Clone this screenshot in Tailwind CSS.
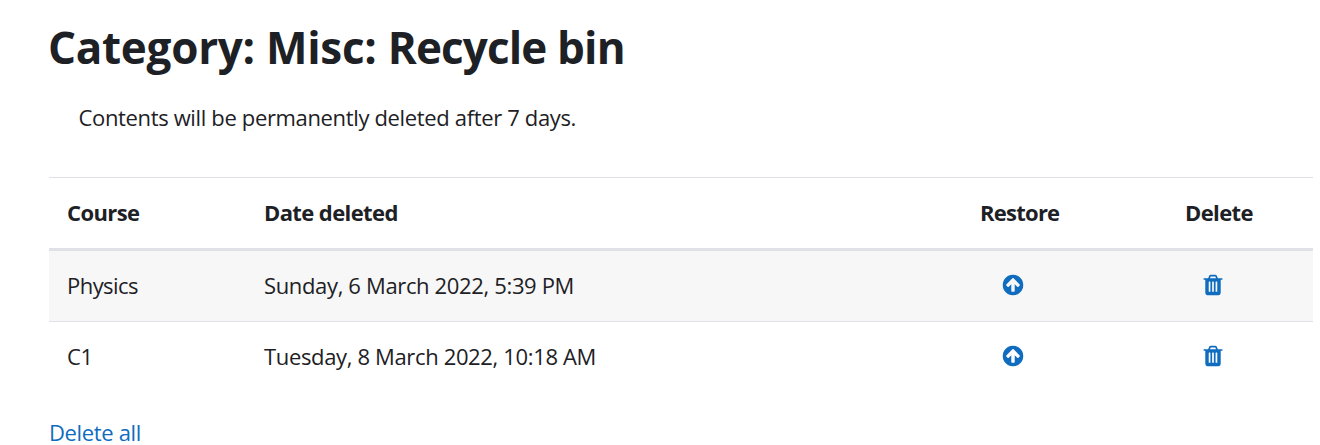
<!DOCTYPE html>
<html lang="en">
<head>
    <meta charset="UTF-8">
    <meta name="viewport" content="width=device-width, initial-scale=1.0">
    <title>Category: Misc: Recycle bin</title>

    <script src="https://cdn.jsdelivr.net/npm/@tailwindcss/browser@4"></script>
</head>

<body class="h-[445px] overflow-hidden bg-white pl-[49px] pr-[7px] font-['Open_Sans',sans-serif] text-[22px] leading-[34px] tracking-[-0.35px] text-[#1d2125]">
    <h1 class="-ml-px pt-[20px] text-[44px] leading-[54px] font-bold tracking-[-0.28px] whitespace-nowrap">Category: Misc: <span class="tracking-[-0.85px]">Recycle bin</span></h1>

    <p class="mt-[26px] ml-[29.5px] whitespace-nowrap">Contents will be permanently deleted after 7 days.</p>

    <table class="mt-[43px] w-full table-fixed border-separate border-spacing-0 text-left whitespace-nowrap">
        <colgroup>
            <col class="w-[197px]">
            <col class="w-[716px]">
            <col class="w-[205px]">
            <col class="w-[146px]">
        </colgroup>
        <thead>
            <tr class="h-[74px] tracking-[-0.6px]">
                <th class="border-t border-b-3 border-[#dee2e6] px-[18px] pt-0 pb-[2px]">Course</th>
                <th class="border-t border-b-3 border-[#dee2e6] px-[18px] pt-0 pb-[2px]">Date deleted</th>
                <th class="border-t border-b-3 border-[#dee2e6] px-[18px] pt-0 pb-[2px] tracking-[-0.75px]">Restore</th>
                <th class="border-t border-b-3 border-[#dee2e6] px-[18px] pt-0 pb-[2px]">Delete</th>
            </tr>
        </thead>
        <tbody>
            <tr class="h-[71px] bg-[#f7f7f7]">
                <td class="border-b border-[#dee2e6] px-[18px] pt-0 pb-[2px] tracking-[-0.55px]">Physics</td>
                <td class="border-b border-[#dee2e6] px-[18px] pt-0 pb-[2px]">Sunday, 6 March 2022, 5:39 PM</td>
                <td class="border-b border-[#dee2e6] pt-0 pb-[2px] pl-[39.3px]">
                    <a href="#" aria-label="Restore" class="text-[#0f6cbf]">
                        <svg class="size-6 fill-current" viewBox="0 0 1792 1792">
                            <path d="M1412 895q0-27-18-45l-362-362-91-91q-18-18-45-18t-45 18l-91 91-362 362q-18 18-18 45t18 45l91 91q18 18 45 18t45-18l189-189v502q0 26 19 45t45 19h128q26 0 45-19t19-45v-502l189 189q19 19 45 19t45-19l91-91q18-18 18-45zm252 1q0 209-103 385.5t-279.5 279.5-385.5 103-385.5-103-279.5-279.5-103-385.5 103-385.5 279.5-279.5 385.5-103 385.5 103 279.5 279.5 103 385.5z"></path>
                        </svg>
                    </a>
                </td>
                <td class="border-b border-[#dee2e6] pt-0 pb-[2px] pl-[34px]">
                    <a href="#" aria-label="Delete" class="text-[#0f6cbf]">
                        <svg class="size-6 fill-current" viewBox="0 0 1792 1792">
                            <path d="M704 1376v-704q0-14-9-23t-23-9h-64q-14 0-23 9t-9 23v704q0 14 9 23t23 9h64q14 0 23-9t9-23zm256 0v-704q0-14-9-23t-23-9h-64q-14 0-23 9t-9 23v704q0 14 9 23t23 9h64q14 0 23-9t9-23zm256 0v-704q0-14-9-23t-23-9h-64q-14 0-23 9t-9 23v704q0 14 9 23t23 9h64q14 0 23-9t9-23zm-544-992h448l-48-117q-7-9-17-11h-317q-10 2-17 11zm928 32v64q0 14-9 23t-23 9h-96v948q0 83-47 143.5t-113 60.5h-832q-66 0-113-58.5t-47-141.5v-952h-96q-14 0-23-9t-9-23v-64q0-14 9-23t23-9h309l70-167q15-37 54-63t79-26h320q40 0 79 26t54 63l70 167h309q14 0 23 9t9 23z"></path>
                        </svg>
                    </a>
                </td>
            </tr>
            <tr class="h-[70px]">
                <td class="px-[18px] pt-0 pb-[2px]">C1</td>
                <td class="px-[18px] pt-0 pb-[2px]">Tuesday, 8 March 2022, 10:18 AM</td>
                <td class="pt-0 pb-[2px] pl-[39.3px]">
                    <a href="#" aria-label="Restore" class="text-[#0f6cbf]">
                        <svg class="size-6 fill-current" viewBox="0 0 1792 1792">
                            <path d="M1412 895q0-27-18-45l-362-362-91-91q-18-18-45-18t-45 18l-91 91-362 362q-18 18-18 45t18 45l91 91q18 18 45 18t45-18l189-189v502q0 26 19 45t45 19h128q26 0 45-19t19-45v-502l189 189q19 19 45 19t45-19l91-91q18-18 18-45zm252 1q0 209-103 385.5t-279.5 279.5-385.5 103-385.5-103-279.5-279.5-103-385.5 103-385.5 279.5-279.5 385.5-103 385.5 103 279.5 279.5 103 385.5z"></path>
                        </svg>
                    </a>
                </td>
                <td class="pt-0 pb-[2px] pl-[34px]">
                    <a href="#" aria-label="Delete" class="text-[#0f6cbf]">
                        <svg class="size-6 fill-current" viewBox="0 0 1792 1792">
                            <path d="M704 1376v-704q0-14-9-23t-23-9h-64q-14 0-23 9t-9 23v704q0 14 9 23t23 9h64q14 0 23-9t9-23zm256 0v-704q0-14-9-23t-23-9h-64q-14 0-23 9t-9 23v704q0 14 9 23t23 9h64q14 0 23-9t9-23zm256 0v-704q0-14-9-23t-23-9h-64q-14 0-23 9t-9 23v704q0 14 9 23t23 9h64q14 0 23-9t9-23zm-544-992h448l-48-117q-7-9-17-11h-317q-10 2-17 11zm928 32v64q0 14-9 23t-23 9h-96v948q0 83-47 143.5t-113 60.5h-832q-66 0-113-58.5t-47-141.5v-952h-96q-14 0-23-9t-9-23v-64q0-14 9-23t23-9h309l70-167q15-37 54-63t79-26h320q40 0 79 26t54 63l70 167h309q14 0 23 9t9 23z"></path>
                        </svg>
                    </a>
                </td>
            </tr>
        </tbody>
    </table>

    <a href="#" class="mt-[28px] block leading-6 text-[#0f6cbf]">Delete all</a>
</body>
</html>
